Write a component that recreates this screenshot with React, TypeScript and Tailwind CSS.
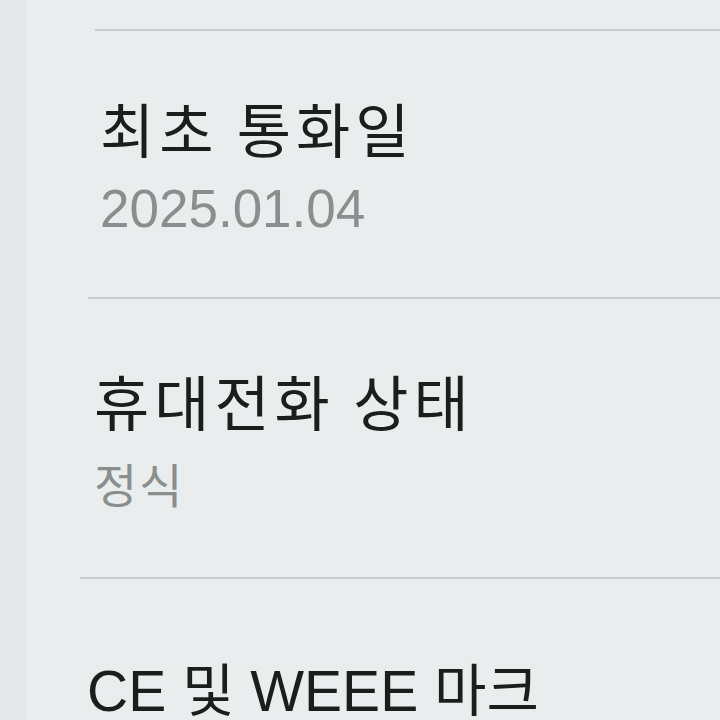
const ko = { fontFamily: '"Noto Sans CJK KR", "Noto Sans", sans-serif' };
const mixed = { fontFamily: '"Liberation Sans", "Noto Sans CJK KR", sans-serif' };
const num = { fontFamily: '"Liberation Sans", Arial, sans-serif' };

export default function App() {
  return (
    <div className="flex h-[720px] w-[720px] overflow-hidden bg-[#eaeded]">
      <div className="w-[28px] shrink-0 border-r border-[#eef1f1] bg-[#e5e8e8]" />
      <div className="flex-1 pt-[29px]">
        <div className="pl-[67px]">
          <div className="h-[2px] bg-[#c9cccc]" />
          <div className="pl-[5px] pt-[62px] pb-[58px]">
            <div className="text-[59px] leading-[70px] tracking-[5px] text-[#1c1d1d]" style={ko}>
              최초 통화일
            </div>
            <div className="mt-[16px] text-[53px] leading-[60px] text-[#8b8e8e]" style={num}>
              2025.01.04
            </div>
          </div>
        </div>
        <div className="pl-[60px]">
          <div className="h-[2px] bg-[#c9cccc]" />
          <div className="pl-[6px] pt-[66px] pb-[64px]">
            <div className="text-[60px] leading-[70px] tracking-[5px] text-[#1c1d1d]" style={ko}>
              휴대전화 상태
            </div>
            <div className="mt-[18px] text-[47px] leading-[60px] tracking-[2px] text-[#8b8e8e]" style={ko}>
              정식
            </div>
          </div>
        </div>
        <div className="pl-[52px]">
          <div className="h-[2px] bg-[#c9cccc]" />
          <div className="pl-[7px] pt-[77px]">
            <div className="text-[57px] leading-[70px] text-[#1c1d1d]" style={mixed}>
              CE 및 WEEE 마크
            </div>
          </div>
        </div>
      </div>
    </div>
  );
}
